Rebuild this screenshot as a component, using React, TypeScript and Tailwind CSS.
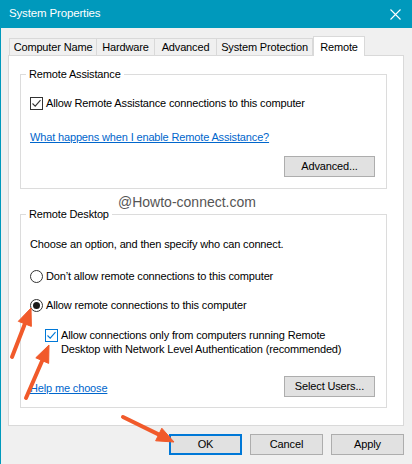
import React from "react";

const font = "font-['Liberation_Sans',Arial,sans-serif]";

function Arrow({ x1, y1, x2, y2 }: { x1: number; y1: number; x2: number; y2: number }) {
  const dx = x2 - x1;
  const dy = y2 - y1;
  const len = Math.hypot(dx, dy);
  const ux = dx / len;
  const uy = dy / len;
  const head = 17;
  const half = 7;
  const bx = x2 - ux * head;
  const by = y2 - uy * head;
  const pts = `${x2},${y2} ${bx - uy * half},${by + ux * half} ${bx + uy * half},${by - ux * half}`;
  return (
    <g fill="#f15a2b" stroke="#f15a2b">
      <line x1={x1} y1={y1} x2={bx + ux * 2} y2={by + uy * 2} strokeWidth={4} strokeLinecap="round" />
      <polygon points={pts} strokeWidth={1} strokeLinejoin="round" />
    </g>
  );
}

function CheckBox({ focused }: { focused?: boolean }) {
  const c = focused ? "#0078d7" : "#333333";
  return (
    <span className={`flex h-[13px] w-[13px] shrink-0 items-center justify-center border bg-white ${focused ? "border-[#0078d7]" : "border-[#333333]"}`}>
      <svg width="11" height="11" viewBox="0 0 11 11">
        <path d="M1.5 5.5 L4.2 8.2 L9.5 2.2" fill="none" stroke={c} strokeWidth="1.1" />
      </svg>
    </span>
  );
}

function Radio({ checked }: { checked?: boolean }) {
  return (
    <span className="flex h-[13px] w-[13px] shrink-0 items-center justify-center rounded-full border border-[#333333] bg-white">
      {checked && <span className="h-[7px] w-[7px] rounded-full bg-[#1a1a1a]" />}
    </span>
  );
}

function Button({ label, wide, primary }: { label: string; wide?: boolean; primary?: boolean }) {
  return (
    <div
      className={`flex h-[21px] items-center justify-center bg-[#e1e1e1] text-black ${
        wide ? "w-[91px]" : "w-[73px]"
      } ${primary ? "border-2 border-[#0078d7]" : "border border-[#adadad]"}`}
    >
      {label}
    </div>
  );
}

const tabs = [
  { label: "Computer Name", w: "w-[88px]" },
  { label: "Hardware", w: "w-[58px]" },
  { label: "Advanced", w: "w-[62px]" },
  { label: "System Protection", w: "w-[96px]" },
];

export default function App() {
  return (
    <div className={`relative h-[464px] w-[412px] overflow-hidden border-l border-[#0099bc] bg-[#f0f0f0] text-[11px] tracking-[-0.15px] text-black ${font}`}>
      {/* title bar */}
      <div className="flex h-[28px] items-center justify-between bg-[#0099bc] pl-[8px] pr-[11px]">
        <span className="text-[11.5px] text-white">System Properties</span>
        <svg width="11" height="11" viewBox="0 0 11 11">
          <path d="M0.5 0.5 L10.5 10.5 M10.5 0.5 L0.5 10.5" stroke="#ffffff" strokeWidth="1.1" />
        </svg>
      </div>

      {/* tabs */}
      <div className="ml-[8px] mt-[8px] flex items-end whitespace-nowrap">
        {tabs.map((t, i) => (
          <div
            key={t.label}
            className={`flex h-[17px] items-center justify-center border-t border-[#d9d9d9] ${t.w} ${i === 0 ? "border-l" : ""} border-r`}
          >
            {t.label}
          </div>
        ))}
        <div className="relative z-10 -mb-px flex h-[20px] w-[52px] items-start justify-center border-x border-t border-[#d9d9d9] bg-white pt-[2px]">
          Remote
        </div>
      </div>

      {/* panel */}
      <div className="relative ml-[7px] h-[371px] w-[396px] border border-[#d9d9d9] bg-white pl-[11px]">
        <fieldset className="mt-[10px] w-[367px] border border-[#dcdcdc] pb-[11px] pl-[9px] pr-[11px]">
          <legend className="-ml-[4px] px-[3px] leading-[16px]">Remote Assistance</legend>
          <div className="mt-[13px] flex h-[16px] items-center gap-[3px]">
            <CheckBox />
            <span>Allow Remote Assistance connections to this computer</span>
          </div>
          <div className="mt-[18px] h-[16px] leading-[16px] text-[#0066cc] underline">
            What happens when I enable Remote Assistance?
          </div>
          <div className="mt-[11px] flex justify-end">
            <Button label="Advanced..." wide />
          </div>
        </fieldset>

        <fieldset className="mt-[17px] w-[367px] border border-[#dcdcdc] pb-[10px] pl-[9px] pr-[11px]">
          <legend className="-ml-[4px] px-[3px] leading-[16px]">Remote Desktop</legend>
          <div className="mt-[14px] h-[16px] leading-[16px]">Choose an option, and then specify who can connect.</div>
          <div className="mt-[16px] flex h-[16px] items-center gap-[3px]">
            <Radio />
            <span>Don’t allow remote connections to this computer</span>
          </div>
          <div className="mt-[13px] flex h-[16px] items-center gap-[3px]">
            <Radio checked />
            <span>Allow remote connections to this computer</span>
          </div>
          <div className="ml-[15px] mt-[15px] flex items-start gap-[3px]">
            <span className="mt-px">
              <CheckBox focused />
            </span>
            <span className="leading-[14px]">
              Allow connections only from computers running Remote
              <br />
              Desktop with Network Level Authentication (recommended)
            </span>
          </div>
          <div className="mt-[20px] flex items-center justify-between">
            <span className="mt-[3px] text-[#0066cc] underline">Help me choose</span>
            <Button label="Select Users..." wide />
          </div>
        </fieldset>

        <div className="absolute left-[109px] top-[137px] text-[14px] leading-[18px] tracking-normal text-[#555555]">@Howto-connect.com</div>
      </div>

      {/* dialog buttons */}
      <div className="mt-[8px] flex justify-end gap-[8px] pr-[8px]">
        <Button label="OK" primary />
        <Button label="Cancel" />
        <Button label="Apply" />
      </div>

      {/* annotation arrows */}
      <svg className="pointer-events-none absolute left-[-1px] top-0" width="412" height="464">
        <Arrow x1={12} y1={357} x2={31} y2={308} />
        <Arrow x1={26} y1={398} x2={49} y2={345} />
        <Arrow x1={123} y1={417} x2={174} y2={442} />
      </svg>
    </div>
  );
}
